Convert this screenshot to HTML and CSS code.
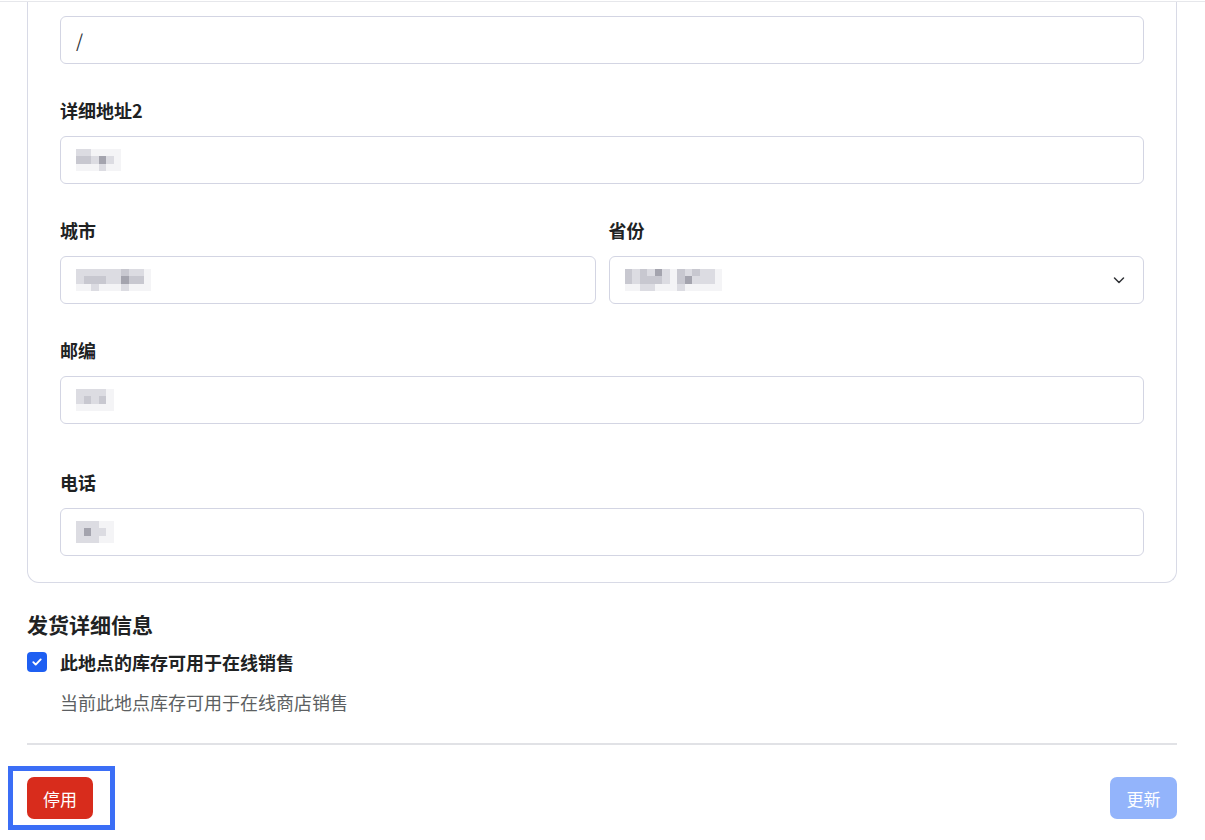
FILE: index.html
```html
<!DOCTYPE html>
<html lang="zh-CN">
<head>
    <meta charset="UTF-8">
    <meta name="viewport" content="width=device-width, initial-scale=1.0">
    <title>地点详情</title>
    <link rel="stylesheet" href="styles.css">
</head>
<body>
    <div class="topline"></div>
    <div id="page">
        <div class="card">
            <div class="field first">
                <div class="input">/</div>
            </div>

            <div class="field">
                <label class="label">详细地址2</label>
                <div class="input">
                    <div class="pix w6">
                        <span class="s1"></span><span class="s1"></span><span class="s0"></span><span class="s0"></span><span class="s0"></span><span class="s0"></span>
                        <span class="s2"></span><span class="s2"></span><span class="s1"></span><span class="s3"></span><span class="s1"></span><span class="s0"></span>
                        <span class="s0"></span><span class="s0"></span><span class="s0"></span><span class="s1"></span><span class="s0"></span><span class="s0"></span>
                    </div>
                </div>
            </div>

            <div class="row">
                <div class="field">
                    <label class="label">城市</label>
                    <div class="input">
                        <div class="pix w10">
                            <span class="s1"></span><span class="s1"></span><span class="s1"></span><span class="s1"></span><span class="s1"></span><span class="s1"></span><span class="s2"></span><span class="s1"></span><span class="s1"></span><span class="s0"></span>
                            <span class="s1"></span><span class="s2"></span><span class="s2"></span><span class="s2"></span><span class="s1"></span><span class="s1"></span><span class="s3"></span><span class="s2"></span><span class="s2"></span><span class="s0"></span>
                            <span class="s0"></span><span class="s0"></span><span class="s1"></span><span class="s0"></span><span class="s0"></span><span class="s0"></span><span class="s1"></span><span class="s0"></span><span class="s0"></span><span class="s0"></span>
                        </div>
                    </div>
                </div>
                <div class="field">
                    <label class="label">省份</label>
                    <div class="input select">
                        <div class="pix w13">
                            <span class="s2"></span><span class="s1"></span><span class="s2"></span><span class="s1"></span><span class="s3"></span><span class="s1"></span><span class="s0"></span><span class="s2"></span><span class="s1"></span><span class="s2"></span><span class="s1"></span><span class="s1"></span><span class="s0"></span>
                            <span class="s2"></span><span class="s1"></span><span class="s2"></span><span class="s2"></span><span class="s2"></span><span class="s1"></span><span class="s0"></span><span class="s2"></span><span class="s3"></span><span class="s1"></span><span class="s1"></span><span class="s1"></span><span class="s0"></span>
                            <span class="s0"></span><span class="s0"></span><span class="s1"></span><span class="s1"></span><span class="s0"></span><span class="s0"></span><span class="s0"></span><span class="s1"></span><span class="s0"></span><span class="s0"></span><span class="s0"></span><span class="s0"></span><span class="s0"></span>
                        </div>
                        <svg class="chevron" width="14" height="14" viewBox="0 0 14 14" fill="none">
                            <path d="M2.5 5l4.5 4.5L11.5 5" stroke="#303236" stroke-width="1.5" stroke-linecap="round" stroke-linejoin="round"/>
                        </svg>
                    </div>
                </div>
            </div>

            <div class="field">
                <label class="label">邮编</label>
                <div class="input">
                    <div class="pix w5">
                        <span class="s1"></span><span class="s1"></span><span class="s1"></span><span class="s1"></span><span class="s0"></span>
                        <span class="s1"></span><span class="s2"></span><span class="s1"></span><span class="s2"></span><span class="s0"></span>
                        <span class="s0"></span><span class="s0"></span><span class="s0"></span><span class="s0"></span><span class="s0"></span>
                    </div>
                </div>
            </div>

            <div class="field wide-gap">
                <label class="label">电话</label>
                <div class="input">
                    <div class="pix w5">
                        <span class="s1"></span><span class="s1"></span><span class="s1"></span><span class="s0"></span><span class="s0"></span>
                        <span class="s1"></span><span class="s3"></span><span class="s1"></span><span class="s1"></span><span class="s0"></span>
                        <span class="s1"></span><span class="s1"></span><span class="s1"></span><span class="s0"></span><span class="s0"></span>
                    </div>
                </div>
            </div>
        </div>

        <div class="shipping">
            <h2 class="section-title">发货详细信息</h2>
            <div class="check-row">
                <span class="checkbox">
                    <svg width="12" height="12" viewBox="0 0 12 12" fill="none">
                        <path d="M2.3 6.2l2.4 2.4 5-5.2" stroke="#fff" stroke-width="1.9" stroke-linecap="round" stroke-linejoin="round"/>
                    </svg>
                </span>
                <span class="check-label">此地点的库存可用于在线销售</span>
            </div>
            <p class="help">当前此地点库存可用于在线商店销售</p>
        </div>

        <div class="divider"></div>

        <div class="actions">
            <div class="focus-wrap">
                <button class="btn danger">停用</button>
                <div class="focus-ring"></div>
            </div>
            <button class="btn primary" disabled>更新</button>
        </div>
    </div>
</body>
</html>
```

FILE: styles.css
```css
body {
    margin: 0;
    font-family: "Noto Sans CJK SC", "Liberation Sans", sans-serif;
    color: #202223;
    background: #fff;
}
.topline {
    height: 1px;
    margin-top: 1px;
    background: #e6e7eb;
}
#page {
    width: 1150px;
    margin-left: 27px;
    padding-bottom: 22px;
}
.card {
    border: 1px solid #d8dae6;
    border-top: none;
    border-radius: 0 0 12px 12px;
    padding: 0 32px 26px 32px;
}
.field {
    margin-top: 33px;
}
.field.first {
    margin-top: 0;
    padding-top: 14px;
}
.field.wide-gap {
    margin-top: 45px;
}
.label {
    display: block;
    font-size: 18px;
    line-height: 26px;
    font-weight: 600;
    margin-bottom: 13px;
}
.input {
    height: 46px;
    border: 1px solid #d3d5e3;
    border-radius: 6px;
    display: flex;
    align-items: center;
    padding: 0 15px;
    font-size: 18px;
    color: #303236;
}
.select {
    justify-content: space-between;
    padding-right: 17px;
}
.row {
    display: grid;
    grid-template-columns: 1fr 1fr;
    gap: 13px;
}
.pix {
    display: grid;
    grid-auto-rows: 7.5px;
}
.pix.w5 { grid-template-columns: repeat(5, 7.5px); }
.pix.w6 { grid-template-columns: repeat(6, 7.5px); }
.pix.w10 { grid-template-columns: repeat(10, 7.5px); }
.pix.w13 { grid-template-columns: repeat(13, 7.5px); }
.s0 { background: #f4f4f6; }
.s1 { background: #dcdce2; }
.s2 { background: #c8c8d0; }
.s3 { background: #a4a4ae; }
.shipping {
    padding-top: 27px;
}
.section-title {
    margin: 0;
    font-size: 21px;
    line-height: 28px;
    font-weight: 600;
}
.check-row {
    display: flex;
    align-items: center;
    margin-top: 11px;
}
.checkbox {
    width: 20px;
    height: 20px;
    border-radius: 4px;
    background: #1e5ff2;
    display: flex;
    align-items: center;
    justify-content: center;
    margin-right: 13px;
}
.check-label {
    font-size: 18px;
    font-weight: 600;
    line-height: 26px;
}
.help {
    margin: 14px 0 0 33px;
    font-size: 18px;
    line-height: 26px;
    color: #5c5f62;
}
.divider {
    height: 2px;
    background: #e1e2e6;
    margin-top: 28px;
}
.actions {
    display: flex;
    justify-content: space-between;
    margin-top: 32px;
}
.btn {
    height: 42px;
    padding: 0;
    border: none;
    border-radius: 7px;
    font-family: inherit;
    font-size: 17px;
    color: #fff;
}
.danger {
    background: #d82c1c;
    width: 66px;
}
.primary {
    background: #93b4fb;
    width: 67px;
}
.focus-wrap {
    position: relative;
}
.focus-ring {
    position: absolute;
    left: -19px;
    top: -11px;
    width: 97px;
    height: 54px;
    border: 5px solid #3b6ef6;
}
```
